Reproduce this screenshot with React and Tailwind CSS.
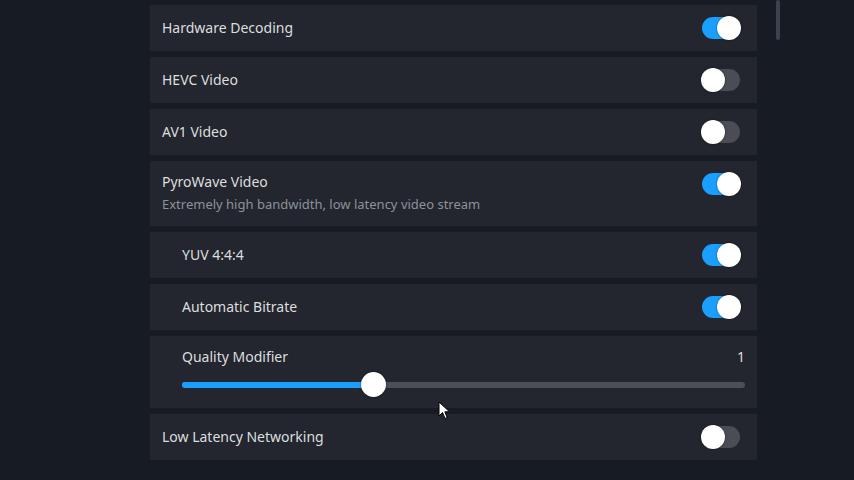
import React from "react";

function Toggle({ on }) {
  return (
    <div
      className={`relative w-[38px] h-[22px] rounded-full shrink-0 ${on ? "bg-[#1a9fff]" : "bg-[#4a4d55]"}`}
    >
      <div
        className={`absolute top-[-1px] w-[24px] h-[24px] rounded-full bg-white shadow-[0_0_2px_rgba(0,0,0,0.6)] ${on ? "right-[-1px]" : "left-[-1px]"}`}
      />
    </div>
  );
}

function Row({ label, on, indent, sub }) {
  return (
    <div
      className={`bg-[#23262e] flex ${sub ? "items-start pt-[11px] h-[65px]" : "items-center h-[46px]"} justify-between pr-[17px] ${indent ? "pl-[32px]" : "pl-[12px]"}`}
    >
      <div className="flex flex-col">
        <div className="text-[14px] leading-[20px] text-[#dcdedf]">{label}</div>
        {sub && (
          <div className="text-[13px] leading-[20px] mt-[2px] text-[#8b929a]">{sub}</div>
        )}
      </div>
      <div className={sub ? "mt-[1px]" : ""}>
        <Toggle on={on} />
      </div>
    </div>
  );
}

export default function App() {
  return (
    <div
      className="w-[854px] h-[480px] bg-[#171c24] overflow-hidden relative flex"
      style={{ fontFamily: '"Noto Sans", "Liberation Sans", sans-serif' }}
    >
      <div className="w-[150px] shrink-0" />
      <div className="w-[607px] shrink-0 flex flex-col gap-[6px] pt-[5px]">
        <Row label="Hardware Decoding" on />
        <Row label="HEVC Video" on={false} />
        <Row label="AV1 Video" on={false} />
        <Row
          label="PyroWave Video"
          on
          sub="Extremely high bandwidth, low latency video stream"
        />
        <Row label="YUV 4:4:4" on indent />
        <Row label="Automatic Bitrate" on indent />
        <div className="bg-[#23262e] h-[72px] pl-[32px] pr-[12px] pt-[11px] flex flex-col">
          <div className="flex justify-between items-center">
            <div className="text-[14px] leading-[20px] text-[#dcdedf]">Quality Modifier</div>
            <div className="text-[14px] leading-[20px] text-[#dcdedf]">1</div>
          </div>
          <div className="relative mt-[15px] h-[6px] rounded-full bg-[#4b4f57]">
            <div className="absolute left-0 top-0 h-[6px] w-[191px] rounded-full bg-[#1a9fff]" />
            <div className="absolute left-[179px] top-[-10px] w-[25px] h-[25px] rounded-full bg-white shadow-[0_0_2px_rgba(0,0,0,0.7)]" />
          </div>
        </div>
        <Row label="Low Latency Networking" on={false} />
      </div>
      <div className="w-[19px] shrink-0" />
      <div className="w-[4px] h-[40px] rounded-full bg-[#3d434d] shrink-0" />
      <svg
        className="absolute left-[438px] top-[401px]"
        width="14"
        height="20"
        viewBox="0 0 14 20"
      >
        <path
          d="M1 1 L1 15 L4.5 11.5 L7 17.5 L9.2 16.6 L6.8 10.8 L11.5 10.8 Z"
          fill="white"
          stroke="black"
          strokeWidth="1"
          strokeLinejoin="round"
        />
      </svg>
    </div>
  );
}
